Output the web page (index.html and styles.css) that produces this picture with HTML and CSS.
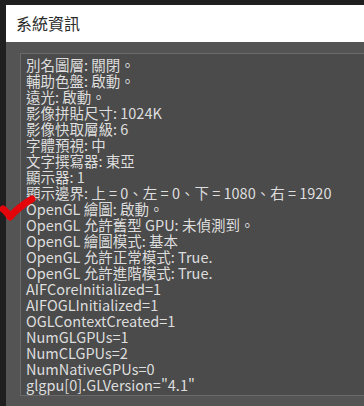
FILE: index.html
```html
<!DOCTYPE html>
<html lang="zh-Hant">
<head>
    <meta charset="UTF-8">
    <meta name="viewport" content="width=device-width, initial-scale=1.0">
    <title>系統資訊</title>
    <link rel="stylesheet" href="styles.css">
</head>
<body>

<div class="window">
    <div class="titlebar">系統資訊</div>

    <div class="content">
        <div class="info-box">
            <div class="line">別名圖層: 關閉。</div>
            <div class="line">輔助色盤: 啟動。</div>
            <div class="line">遠光: 啟動。</div>
            <div class="line">影像拼貼尺寸: 1024K</div>
            <div class="line">影像快取層級: 6</div>
            <div class="line">字體預視: 中</div>
            <div class="line">文字撰寫器: 東亞</div>
            <div class="line">顯示器: 1</div>
            <div class="line">顯示邊界: 上 = 0、左 = 0、下 = 1080、右 = 1920</div>
            <div class="line">OpenGL 繪圖: 啟動。</div>
            <div class="line">OpenGL 允許舊型 GPU: 未偵測到。</div>
            <div class="line">OpenGL 繪圖模式: 基本</div>
            <div class="line">OpenGL 允許正常模式: True.</div>
            <div class="line">OpenGL 允許進階模式: True.</div>
            <div class="line">AIFCoreInitialized=1</div>
            <div class="line">AIFOGLInitialized=1</div>
            <div class="line">OGLContextCreated=1</div>
            <div class="line">NumGLGPUs=1</div>
            <div class="line">NumCLGPUs=2</div>
            <div class="line">NumNativeGPUs=0</div>
            <div class="line">glgpu[0].GLVersion="4.1"</div>
        </div>
    </div>
</div>

<!-- red check mark drawn over the screenshot -->
<svg class="check" width="36" height="28" viewBox="0 0 36 28">
    <path d="M3 14 C6 16 8 19 10 22 C15 16 22 10 32 4" fill="none" stroke="#e3050a" stroke-width="7" stroke-linecap="round" stroke-linejoin="round"/>
</svg>

</body>
</html>
```

FILE: styles.css
```css
body {
    margin: 0;
    padding: 0;
    background-color: #1f1f1f;
    font-family: "Noto Sans CJK TC", "Noto Sans", sans-serif;
    overflow: hidden;
}

.window {
    margin: 5px 0 0 6px;
    height: 401px;
    display: flex;
    flex-direction: column;
}

.titlebar {
    height: 37px;
    line-height: 36px;
    padding-left: 10px;
    background-color: #ffffff;
    color: #2b2b2b;
    font-size: 16px;
}

.content {
    flex: 1;
    background-color: #545454;
    padding: 11px 0 0 14px;
}

.info-box {
    background-color: #4b4b4b;
    border: 1px solid #6a6a6a;
    border-right: none;
    padding: 3px 0 2px 5px;
    color: #dedede;
    font-size: 14.5px;
    line-height: 16px;
}

.line {
    white-space: nowrap;
}

.check {
    position: absolute;
    left: 0;
    top: 195px;
}
```
